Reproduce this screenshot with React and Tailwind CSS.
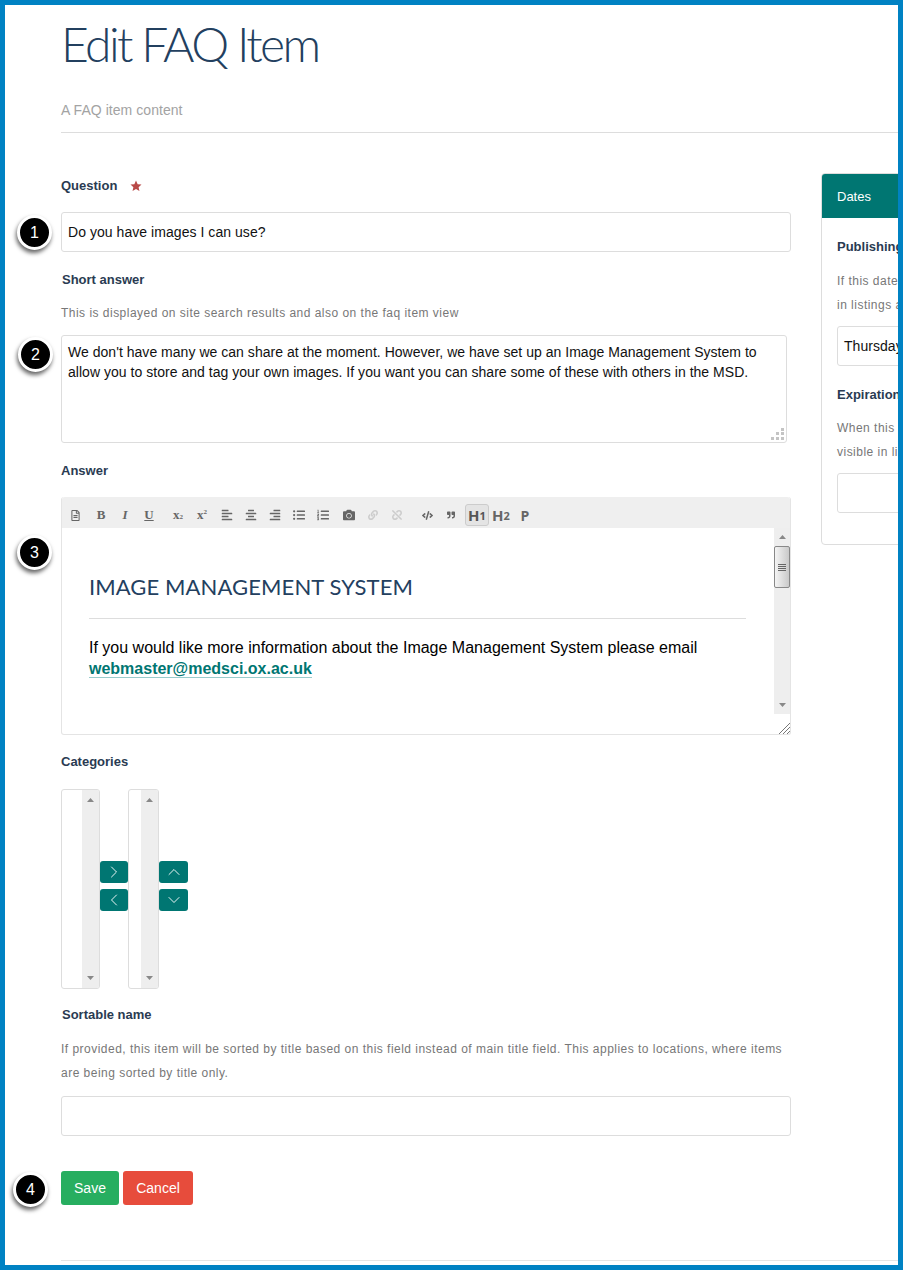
import React from 'react';
import {
  FaRegFileAlt, FaAlignLeft, FaAlignCenter, FaAlignRight, FaListUl, FaListOl,
  FaCamera, FaLink, FaUnlink, FaCode, FaQuoteRight,
} from 'react-icons/fa';
import { ChevronRight, ChevronLeft, ChevronUp, ChevronDown } from 'lucide-react';

// Numbered callout that sits over the form
function Badge({ n, className }) {
  return (
    <div className={`absolute w-[35px] h-[35px] rounded-full bg-black border-[3px] border-white shadow-[-1px_3px_4px_rgba(0,0,0,0.6)] flex items-center justify-center text-white text-[16px] ${className}`}>
      {n}
    </div>
  );
}

function Label({ children, className = '' }) {
  return <div className={`text-[13px] leading-5 font-bold text-[#2a3b52] ${className}`}>{children}</div>;
}

function Help({ children, className = '' }) {
  return <div className={`text-[12px] leading-6 text-[#777] tracking-[0.48px] ${className}`}>{children}</div>;
}

function Field({ children, className = '' }) {
  return (
    <div className={`h-10 border border-[#ddd] rounded-[3px] bg-white px-[6px] flex items-center text-[14px] tracking-[0.05px] text-[#111] ${className}`}>
      {children}
    </div>
  );
}

function Arrow({ up, className = '' }) {
  return (
    <svg width="7" height="4" viewBox="0 0 7 4" className={className}>
      <path d={up ? 'M3.5 0 7 4H0z' : 'M0 0h7L3.500 4z'} fill="#888" />
    </svg>
  );
}

// Grey scroll track, drawn as in the screenshot
function Track({ className = '' }) {
  return (
    <div className={`w-[17px] bg-[#eee] flex flex-col items-center justify-between py-[8px] ${className}`}>
      <Arrow up />
      <Arrow />
    </div>
  );
}

function MoveButton({ children, className = '' }) {
  return (
    <div className={`h-[22px] bg-[#007672] rounded-[3px] flex items-center justify-center text-white ${className}`}>
      {children}
    </div>
  );
}

function Tool({ children, className = '' }) {
  return <span className={`w-6 h-5 flex items-center justify-center text-[#666] ${className}`}>{children}</span>;
}

function Toolbar() {
  const serif = "font-['Liberation_Serif',serif] font-bold text-[13px]";
  return (
    <div className="h-[31px] bg-[#efefef] rounded-t-[3px] flex items-center pl-[1px] pt-[5px]">
      <Tool><FaRegFileAlt size={11} /></Tool>
      <Tool className={`${serif} ml-[2px]`}>B</Tool>
      <Tool className={`${serif} italic`}>I</Tool>
      <Tool className={`${serif} underline`}>U</Tool>
      <Tool className={`${serif} text-[11px] ml-[5px]`}>x<sub className="text-[7px]">2</sub></Tool>
      <Tool className={`${serif} text-[11px]`}>x<sup className="text-[7px]">2</sup></Tool>
      <Tool className="ml-[1px]"><FaAlignLeft size={12} /></Tool>
      <Tool><FaAlignCenter size={12} /></Tool>
      <Tool><FaAlignRight size={12} /></Tool>
      <Tool><FaListUl size={12} /></Tool>
      <Tool><FaListOl size={12} /></Tool>
      <Tool className="ml-[2px]"><FaCamera size={12} /></Tool>
      <Tool className="text-[#ccc]"><FaLink size={10} /></Tool>
      <Tool className="text-[#ccc]"><FaUnlink size={10} /></Tool>
      <Tool className="ml-[6px]"><FaCode size={11} /></Tool>
      <Tool><FaQuoteRight size={8} /></Tool>
      <span className="ml-[2px] w-6 h-[22px] border border-[#ccc] rounded-[3px] bg-[#e4e4e4] flex items-center justify-center text-[#555] text-[15px] font-bold font-['Open_Sans',sans-serif]">
        H<span className="text-[11px] mt-[3px]">1</span>
      </span>
      <span className="w-6 flex items-center justify-center text-[#666] text-[15px] font-bold font-['Open_Sans',sans-serif]">
        H<span className="text-[11px] mt-[3px]">2</span>
      </span>
      <span className="w-6 text-center text-[#666] text-[14px] font-bold font-['Open_Sans',sans-serif]">P</span>
    </div>
  );
}

export default function App() {
  return (
    <div className="relative w-[903px] h-[1270px] border-[5px] border-[#0082c3] bg-white overflow-hidden font-['Liberation_Sans',Arial,sans-serif]">
      <Badge n={1} className="left-[12px] top-[210px]" />
      <Badge n={2} className="left-[13px] top-[332px]" />
      <Badge n={3} className="left-[12px] top-[530px]" />
      <Badge n={4} className="left-[8px] top-[1167px]" />

      {/* Page header */}
      <header className="ml-[56px] h-[128px] border-b border-[#ddd]">
        <h1 className="pt-[9px] text-[48px] leading-[60px] font-light font-['Lato',sans-serif] text-[#23405f] tracking-[-2.6px]">
          Edit FAQ Item
        </h1>
        <p className="mt-[26px] text-[14px] leading-5 text-[#a3a3a3] tracking-[0.05px]">A FAQ item content</p>
      </header>

      <div className="flex ml-[56px] w-[1100px]">
        {/* Main form */}
        <main className="w-[730px] shrink-0 pt-[43px]">
          <div className="flex items-center">
            <Label>Question</Label>
            <svg width="12" height="12" viewBox="0 0 24 24" className="ml-[13px]">
              <path d="M12 1l3.300 7.300 7.700.8-5.800 5.200 1.700 7.700L12 18l-6.900 4 1.700-7.700L1 9.100l7.700-.8z" fill="#b94a48" />
            </svg>
          </div>
          <Field className="mt-[16px]">Do you have images I can use?</Field>

          <Label className="mt-[18px] ml-[1px]">Short answer</Label>
          <Help className="mt-[11px]">This is displayed on site search results and also on the faq item view</Help>
          <div className="relative mt-[10px] w-[726px] h-[108px] border border-[#ddd] rounded-[3px] px-[6px] py-[6px] text-[14px] leading-5 tracking-[0.03px] text-[#111]">
            We don't have many we can share at the moment. However, we have set up an Image Management System to allow you to store and tag your own images. If you want you can share some of these with others in the MSD.
            <svg width="14" height="14" viewBox="0 0 14 14" className="absolute right-[1px] bottom-[1px]" fill="#c4c4c4">
              <rect x="10" y="1" width="3" height="3" />
              <rect x="5" y="5" width="3" height="3" />
              <rect x="10" y="5" width="3" height="3" />
              <rect x="0" y="10" width="3" height="3" />
              <rect x="5" y="10" width="3" height="3" />
              <rect x="10" y="10" width="3" height="3" />
            </svg>
          </div>

          <Label className="mt-[18px]">Answer</Label>
          <div className="mt-[16px] relative h-[238px] border-l border-b border-r border-[#e4e4e4] rounded-[3px]">
            <Toolbar />
            <div className="flex h-[186px]">
              <div className="w-[712px] pl-[27px] pr-[28px]">
                <h2 className="pt-[46px] pb-[19px] border-b border-[#ddd] text-[22px] leading-[25px] font-['Lato',sans-serif] text-[#23405f] tracking-[0.1px] uppercase">
                  Image Management System
                </h2>
                <p className="mt-[18px] text-[16px] leading-[21px] text-black">
                  If you would like more information about the Image Management System please email{' '}
                  <span className="font-bold text-[#007672] border-b border-[#9cc]">webmaster@medsci.ox.ac.uk</span>
                </p>
              </div>
              <div className="w-[16px] bg-[#eee] flex flex-col items-center py-[7px] relative">
                <Arrow up />
                <div className="absolute top-[18px] left-0 w-[16px] h-[42px] rounded-[2px] border border-[#888] bg-gradient-to-r from-[#f4f4f4] to-[#c9c9c9] flex flex-col items-center justify-center gap-[1px]">
                  <span className="w-2 h-px bg-[#666]" />
                  <span className="w-2 h-px bg-[#666]" />
                  <span className="w-2 h-px bg-[#666]" />
                  <span className="w-2 h-px bg-[#666]" />
                </div>
                <Arrow className="mt-auto" />
              </div>
            </div>
            <svg width="11" height="11" viewBox="0 0 11 11" className="absolute right-0 bottom-0" stroke="#777" fill="none">
              <path d="M0 11 11 0M4 11l7-7M8 11l3-3" />
            </svg>
          </div>

          <Label className="mt-[17px]">Categories</Label>
          <div className="mt-[17px] flex items-center h-[200px]">
            <div className="flex w-[39px] h-full border border-[#ddd] rounded-[3px] overflow-hidden shrink-0">
              <div className="flex-1" />
              <Track />
            </div>
            <div className="flex flex-col gap-[6px] w-[28px] mb-[6px]">
              <MoveButton><ChevronRight size={20} strokeWidth={1.1} /></MoveButton>
              <MoveButton><ChevronLeft size={20} strokeWidth={1.1} /></MoveButton>
            </div>
            <div className="flex w-[31px] h-full border border-[#ddd] rounded-[3px] overflow-hidden shrink-0">
              <div className="flex-1" />
              <Track />
            </div>
            <div className="flex flex-col gap-[6px] w-[29px] mb-[6px]">
              <MoveButton><ChevronUp size={20} strokeWidth={1.1} /></MoveButton>
              <MoveButton><ChevronDown size={20} strokeWidth={1.1} /></MoveButton>
            </div>
          </div>

          <Label className="mt-[16px] ml-[1px]">Sortable name</Label>
          <Help className="mt-[12px]">
            If provided, this item will be sorted by title based on this field instead of main title field. This applies to locations, where items are being sorted by title only.
          </Help>
          <Field className="mt-[11px]" />

          <div className="mt-[35px] flex gap-1">
            <button className="w-[58px] h-[34px] rounded-[3px] bg-[#27ae60] text-white text-[14px]">Save</button>
            <button className="w-[70px] h-[34px] rounded-[3px] bg-[#e74c3c] text-white text-[14px]">Cancel</button>
          </div>
        </main>

        {/* Sidebar */}
        <aside className="ml-[30px] mt-[40px] w-[420px] h-[372px] border border-[#ddd] rounded-[4px] shrink-0 overflow-hidden">
          <div className="h-[44px] bg-[#007672] px-[15px] pt-[1px] flex items-center text-[13px] text-white">Dates</div>
          <div className="px-[15px] pt-[19px]">
            <Label>Publishing date</Label>
            <Help className="mt-[12px]">If this date is in the future, the content will not show up<br />in listings and searches until this date.</Help>
            <Field className="mt-[9px] w-[300px]">Thursday</Field>
            <Label className="mt-[19px]">Expiration date</Label>
            <Help className="mt-[11px]">When this date is reached, the content will no longer be<br />visible in listings and searches.</Help>
            <Field className="mt-[9px] w-[300px]" />
          </div>
        </aside>
      </div>

      {/* Footer rule */}
      <div className="absolute left-[56px] right-0 bottom-0 h-[5px] border-t border-[#e5e5e5]" />
    </div>
  );
}
